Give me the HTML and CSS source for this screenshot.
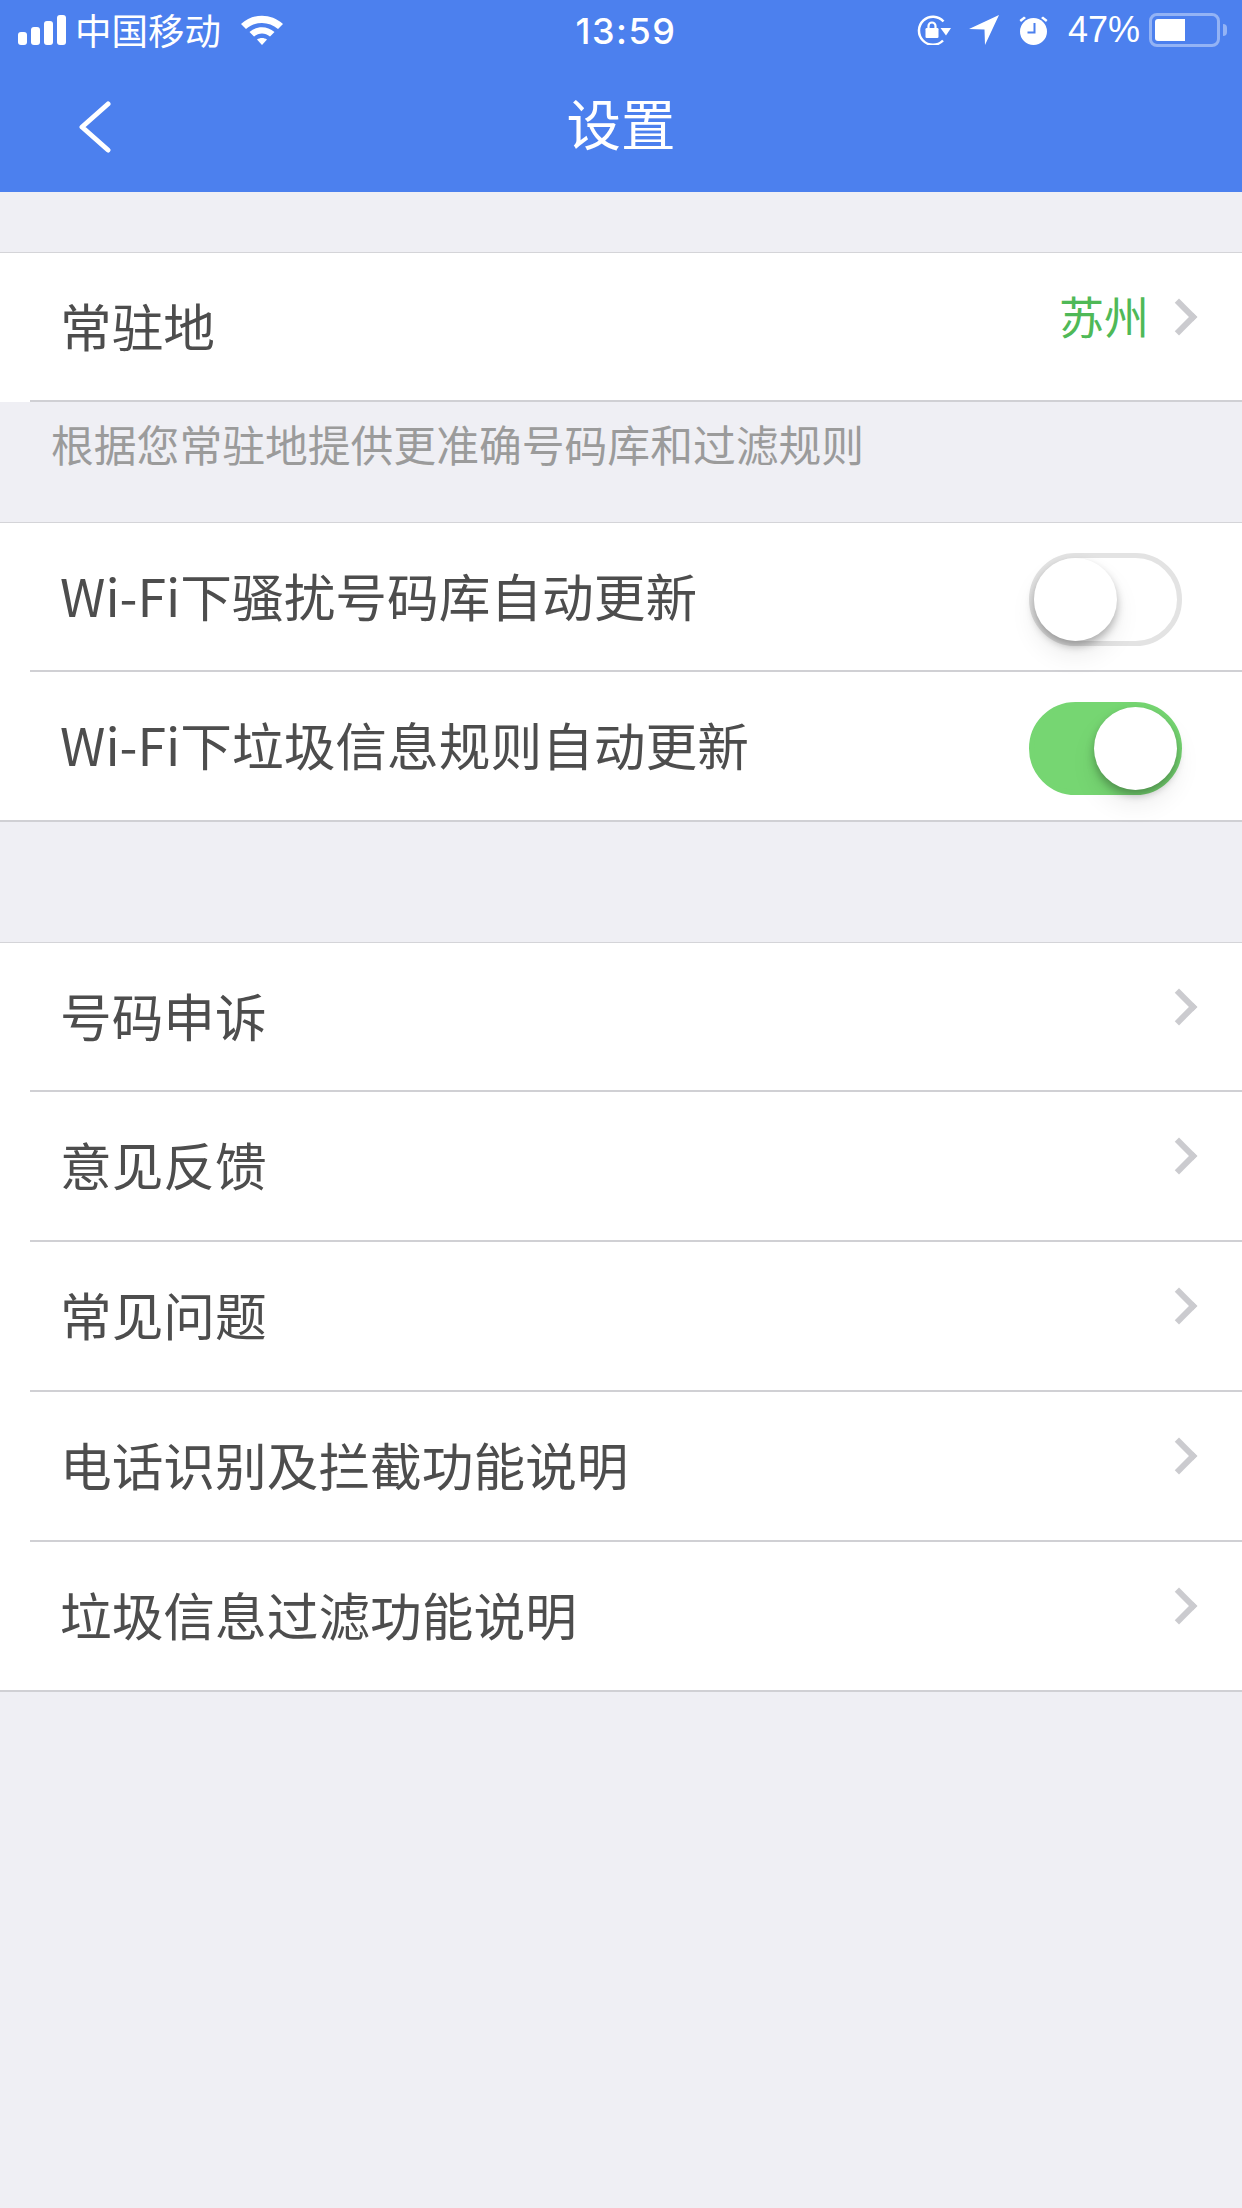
FILE: index.html
```html
<!DOCTYPE html>
<html lang="zh-CN">

<head>
    <meta charset="UTF-8">
    <title>设置</title>
    <link rel="stylesheet" href="styles.css">
</head>

<body>
    <!-- Blue header with status bar -->
    <header class="header">
        <div class="status-bar">
            <div class="status-left">
                <div class="signal"><i class="s1"></i><i class="s2"></i><i class="s3"></i><i class="s4"></i></div>
                <span class="carrier">中国移动</span>
                <svg class="wifi" width="44" height="32" viewBox="0 0 44 32">
                    <path d="M1 10 C13 -1 31 -1 43 10 L38 15 C29 7 15 7 6 15 Z" fill="#fff" />
                    <path d="M9.500 18 C17 11.500 27 11.500 34.500 18 L30 22.500 C25 18.500 19 18.500 14 22.500 Z" fill="#fff" />
                    <path d="M17 25.500 C20 23.500 24 23.500 27 25.500 L22 31 Z" fill="#fff" />
                </svg>
            </div>
            <div class="status-time">13:59</div>
            <div class="status-right">
                <svg class="lock" width="34" height="30" viewBox="0 0 34 30">
                    <path d="M26.500 6.500 A14 14 0 1 0 26 25.500" fill="none" stroke="#fff" stroke-width="2.500" />
                    <path d="M23.500 13 H34 L29 20.500 Z" fill="#fff" />
                    <rect x="8.500" y="13" width="13" height="10" rx="1.200" fill="#fff" />
                    <path d="M11.500 14 V11 A3.500 3.500 0 0 1 18.500 11 V14" fill="none" stroke="#fff" stroke-width="2.200" />
                </svg>
                <svg class="arrow" width="30" height="30" viewBox="0 0 30 30">
                    <path d="M0 14 L30 0 L16 30 L15.500 14.500 Z" fill="#fff" />
                </svg>
                <svg class="alarm" width="29" height="29" viewBox="0 0 29 29">
                    <circle cx="14.500" cy="15.500" r="13.500" fill="#fff" />
                    <path d="M15.500 7 V16.500 H8.500" fill="none" stroke="#4c80ee" stroke-width="2" />
                    <path d="M0.500 4 L5 0.500 L7 2 L2 6 Z M28.500 4 L24 0.500 L22 2 L27 6 Z" fill="#fff" />
                </svg>
                <span class="percent">47%</span>
                <div class="battery"><div class="battery-level"></div></div>
                <div class="battery-tip"></div>
            </div>
        </div>
        <div class="nav-bar">
            <svg class="back" width="34" height="52" viewBox="0 0 34 52">
                <path d="M30 3 L4 26 L30 49" fill="none" stroke="#fff" stroke-width="5" stroke-linecap="round" stroke-linejoin="round" />
            </svg>
            <h1 class="title">设置</h1>
        </div>
    </header>

    <!-- Location -->
    <section class="group group-open">
        <div class="row row-short">
            <span class="label">常驻地</span>
            <span class="value">苏州</span>
            <span class="chevron"></span>
        </div>
    </section>
    <p class="hint">根据您常驻地提供更准确号码库和过滤规则</p>

    <!-- Auto update switches -->
    <section class="group group-tight">
        <div class="row row-short">
            <span class="label">Wi-Fi下骚扰号码库自动更新</span>
            <div class="switch"><div class="knob"></div></div>
        </div>
        <div class="row">
            <span class="label">Wi-Fi下垃圾信息规则自动更新</span>
            <div class="switch switch-on"><div class="knob"></div></div>
        </div>
    </section>

    <!-- Help links -->
    <section class="group group-links">
        <div class="row row-short"><span class="label">号码申诉</span><span class="chevron"></span></div>
        <div class="row"><span class="label">意见反馈</span><span class="chevron"></span></div>
        <div class="row"><span class="label">常见问题</span><span class="chevron"></span></div>
        <div class="row"><span class="label">电话识别及拦截功能说明</span><span class="chevron"></span></div>
        <div class="row"><span class="label">垃圾信息过滤功能说明</span><span class="chevron"></span></div>
    </section>
</body>

</html>
```

FILE: styles.css
```css
/* Page */
body {
    margin: 0;
    height: 2208px;
    overflow: hidden;
    background-color: #efeff4;
    font-family: "Noto Sans CJK SC", "Liberation Sans", sans-serif;
}

/* Header */
.header {
    height: 192px;
    background-color: #4c80ee;
    color: #fff;
}

.status-bar {
    height: 60px;
    display: flex;
    align-items: center;
    justify-content: space-between;
    position: relative;
}

.status-left {
    display: flex;
    align-items: center;
    padding-left: 18px;
}

.signal {
    display: flex;
    align-items: flex-end;
    gap: 4px;
    height: 30px;
}

.signal i {
    display: block;
    width: 9px;
    background-color: #fff;
    border-radius: 3px;
}

.s1 { height: 13px; }
.s2 { height: 18px; }
.s3 { height: 24px; }
.s4 { height: 30px; }

.carrier {
    font-size: 36.500px;
    line-height: 60px;
    margin-left: 9px;
}

.wifi {
    margin-left: 19px;
}

.status-time {
    position: absolute;
    left: 10px;
    right: 0;
    top: 0;
    text-align: center;
    font-family: Inter, "Liberation Sans", sans-serif;
    font-size: 36px;
    font-weight: 500;
    line-height: 62px;
    letter-spacing: 1.500px;
}

.status-right {
    display: flex;
    align-items: center;
    padding-right: 15px;
    font-family: "Liberation Sans", sans-serif;
}

.arrow {
    margin-left: 18px;
}

.alarm {
    margin-left: 20px;
}

.percent {
    font-size: 36px;
    margin-left: 20px;
}

.battery {
    width: 71px;
    height: 34px;
    margin-left: 9px;
    padding: 3px;
    box-sizing: border-box;
    border: 3px solid rgba(255, 255, 255, 0.4);
    border-radius: 8px;
}

.battery-level {
    width: 30px;
    height: 100%;
    background-color: #fff;
    border-radius: 3px 0 0 3px;
}

.battery-tip {
    width: 4px;
    height: 12px;
    margin-left: 3px;
    background-color: rgba(255, 255, 255, 0.4);
    border-radius: 0 4px 4px 0;
}

.nav-bar {
    height: 132px;
    display: flex;
    align-items: center;
    justify-content: center;
    position: relative;
}

.back {
    position: absolute;
    left: 78px;
    top: 41px;
}

.title {
    margin: 0 0 8px;
    font-size: 54.500px;
    font-weight: 400;
    line-height: 132px;
}

/* Groups */
.group {
    background-color: #fff;
    border-top: 1px solid #d4d4d8;
    border-bottom: 2px solid #d0d0d4;
    margin-top: 60px;
}

.group-open {
    border-bottom: none;
}

.group-tight {
    margin-top: 0;
}

.group-links {
    margin-top: 120px;
}

.row {
    height: 148px;
    display: flex;
    align-items: center;
    margin-left: 30px;
    padding-left: 30px;
    border-bottom: 2px solid #d0d0d4;
}

.row-short {
    height: 147px;
}

.row:last-child {
    border-bottom: none;
}

.group-open .row:last-child {
    border-bottom: 2px solid #d0d0d4;
}

.label {
    flex: 1;
    font-size: 51.700px;
    color: #4d4d4d;
    padding-bottom: 5px;
}

.value {
    font-size: 45px;
    color: #4fb957;
    margin-right: 17px;
    margin-bottom: 22px;
}

.chevron {
    width: 20px;
    height: 20px;
    margin-right: 50px;
    margin-bottom: 20px;
    border-top: 6px solid #cbcbcf;
    border-right: 6px solid #cbcbcf;
    transform: rotate(45deg);
}

/* Switches */
.switch {
    width: 153px;
    height: 93px;
    box-sizing: border-box;
    margin-right: 60px;
    margin-top: 5px;
    display: flex;
    border: 5px solid #e3e3e3;
    border-radius: 47px;
    background-color: #fff;
}

.knob {
    width: 83px;
    height: 83px;
    border-radius: 50%;
    background-color: #fff;
    box-shadow: 0 5px 8px rgba(0, 0, 0, 0.28), 0 14px 26px rgba(0, 0, 0, 0.08);
}

.switch-on {
    justify-content: flex-end;
    border-color: #76d672;
    background-color: #76d672;
}

/* Hint under the location row */
.hint {
    height: 120px;
    box-sizing: border-box;
    margin: 0;
    padding: 10px 51px 0;
    font-size: 42.800px;
    line-height: 62px;
    color: #9b9b9b;
}
```
